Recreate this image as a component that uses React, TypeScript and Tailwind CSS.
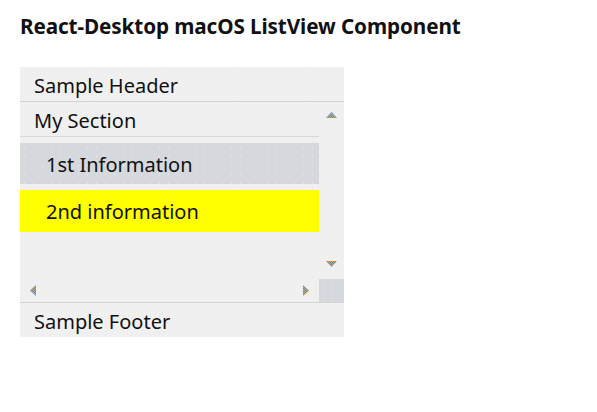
import React from "react";

const Pat = ({ id }: { id: string }) => (
  <defs>
    <pattern id={id} width="2" height="2" patternUnits="userSpaceOnUse">
      <rect width="2" height="2" fill="#4f8fd6" />
      <rect width="1" height="1" fill="#e0a23c" />
      <rect x="1" y="1" width="1" height="1" fill="#e0a23c" />
    </pattern>
  </defs>
);

const Up = () => (
  <svg width="11" height="6" viewBox="0 0 11 6"><Pat id="pu" /><polygon points="5.5,0 11,6 0,6" fill="url(#pu)" /></svg>
);
const Down = () => (
  <svg width="11" height="6" viewBox="0 0 11 6"><Pat id="pd" /><polygon points="0,0 11,0 5.5,6" fill="url(#pd)" /></svg>
);
const Left = () => (
  <svg width="6" height="11" viewBox="0 0 6 11"><Pat id="pl" /><polygon points="6,0 6,11 0,5.5" fill="url(#pl)" /></svg>
);
const Right = () => (
  <svg width="6" height="11" viewBox="0 0 6 11"><Pat id="pr" /><polygon points="0,0 6,5.5 0,11" fill="url(#pr)" /></svg>
);

const dots = "bg-[radial-gradient(circle,#e3e3e3_0.6px,transparent_1px)] bg-[length:9px_9px]";
const wdots = "bg-[radial-gradient(circle,#eceef0_0.6px,transparent_1px)] bg-[length:9px_9px]";

export default function App() {
  return (
    <div className="min-h-[412px] bg-white text-[#111] font-['Noto_Sans',sans-serif]">
      <h3 className="pl-5 pt-[13px] text-[20.7px] leading-[26px] font-bold tracking-[-0.1px]">React-Desktop macOS ListView Component</h3>
      <div className="ml-5 mt-[28px] w-[324px] bg-[#f0f0f0] text-[20px]">
        <div className={`h-[35px] border-b border-[#d2d2d2] pl-[14px] pt-[2px] leading-[34px] ${dots}`}>Sample Header</div>
        <div className="flex h-[177px]">
          <div className={`w-[299px] flex flex-col ${dots}`}>
            <div className="h-[35px] border-b border-[#d8d8d8] pl-[14px] pt-[2px] leading-[34px]">My Section</div>
            <div className={`mt-[6px] h-[41px] bg-[#d5d8dc] pl-[26px] pt-[1px] leading-[41px] ${wdots}`}>1st Information</div>
            <div className="mt-[6px] h-[42px] bg-[#ffff00] pl-[26px] pt-[1px] leading-[42px]">2nd information</div>
          </div>
          <div className="w-[25px] flex flex-col items-center justify-between pt-[10px] pb-[12px]">
            <Up />
            <Down />
          </div>
        </div>
        <div className="flex h-[24px] border-b border-[#d2d2d2]">
          <div className="w-[299px] flex items-center justify-between pl-[10px] pr-[10px]">
            <Left />
            <Right />
          </div>
          <div className={`w-[25px] bg-[#d5d8dc] ${wdots}`} />
        </div>
        <div className={`h-[34px] pl-[14px] pt-[2px] leading-[34px] ${dots}`}>Sample Footer</div>
      </div>
    </div>
  );
}
